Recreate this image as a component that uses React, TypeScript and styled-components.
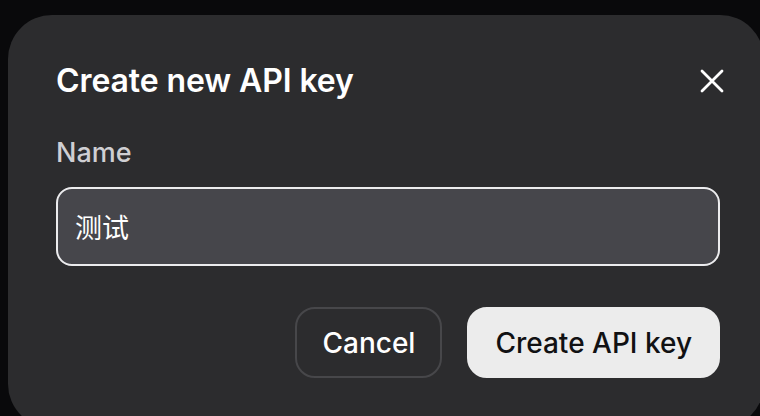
import React from "react";
import styled, { createGlobalStyle } from "styled-components";

const GlobalStyle = createGlobalStyle`
  html, body {
    margin: 0;
    padding: 0;
    background: #09090b;
    overflow: hidden;
  }
  body {
    font-family: Inter, "Noto Sans CJK SC", "Liberation Sans", sans-serif;
    -webkit-font-smoothing: antialiased;
  }
  #root {
    height: 416px;
  }
`;

const Screen = styled.div`
  height: 416px;
  padding: 15px 0 0 8px;
  box-sizing: border-box;
  overflow: hidden;
`;

const Dialog = styled.div`
  width: 756px;
  height: 413px;
  box-sizing: border-box;
  background: #2c2c2e;
  border-radius: 44px;
  padding: 48px 44px 0 48px;
  display: flex;
  flex-direction: column;
  color: #ffffff;
`;

const Header = styled.div`
  display: flex;
  align-items: center;
  justify-content: space-between;
  height: 36px;
`;

const Title = styled.h2`
  margin: 0;
  font-size: 32px;
  line-height: 36px;
  font-weight: 600;
  letter-spacing: -0.1px;
  color: #ffffff;
`;

const CloseButton = styled.button`
  width: 32px;
  height: 32px;
  margin-right: -8px;
  padding: 0;
  border: none;
  background: transparent;
  display: flex;
  align-items: center;
  justify-content: center;
  color: #ffffff;
  cursor: pointer;
`;

const Field = styled.label`
  display: flex;
  flex-direction: column;
  gap: 18px;
  margin-top: 38px;
`;

const Label = styled.span`
  font-size: 27px;
  line-height: 32px;
  font-weight: 500;
  color: #cfcfd3;
`;

const Input = styled.input`
  box-sizing: border-box;
  width: 100%;
  height: 79px;
  padding: 0 17px;
  border: 2px solid #ececee;
  border-radius: 16px;
  background: #46464b;
  color: #ffffff;
  font-family: Inter, "Noto Sans CJK SC", sans-serif;
  font-size: 27px;
  outline: none;
`;

const Actions = styled.div`
  display: flex;
  justify-content: flex-end;
  gap: 25px;
  margin-top: 41px;
`;

const Button = styled.button<{ $primary?: boolean }>`
  box-sizing: border-box;
  height: 71px;
  padding: 0 ${(p) => (p.$primary ? "26px" : "25px")};
  border-radius: 20px;
  border: 2px solid ${(p) => (p.$primary ? "#ececec" : "#47474a")};
  background: ${(p) => (p.$primary ? "#ececec" : "transparent")};
  color: ${(p) => (p.$primary ? "#111113" : "#ffffff")};
  font-family: Inter, "Liberation Sans", sans-serif;
  font-size: 28px;
  font-weight: 500;
  cursor: pointer;
`;

export default function App() {
  return (
    <>
      <GlobalStyle />
      <Screen>
        <Dialog role="dialog" aria-labelledby="dlg-title">
          <Header>
            <Title id="dlg-title">Create new API key</Title>
            <CloseButton aria-label="Close">
              <svg width="24" height="24" viewBox="0 0 24 24" fill="none">
                <path
                  d="M2 2L22 22M22 2L2 22"
                  stroke="currentColor"
                  strokeWidth="2.8"
                  strokeLinecap="round"
                />
              </svg>
            </CloseButton>
          </Header>
          <Field>
            <Label>Name</Label>
            <Input defaultValue="测试" />
          </Field>
          <Actions>
            <Button>Cancel</Button>
            <Button $primary>Create API key</Button>
          </Actions>
        </Dialog>
      </Screen>
    </>
  );
}
